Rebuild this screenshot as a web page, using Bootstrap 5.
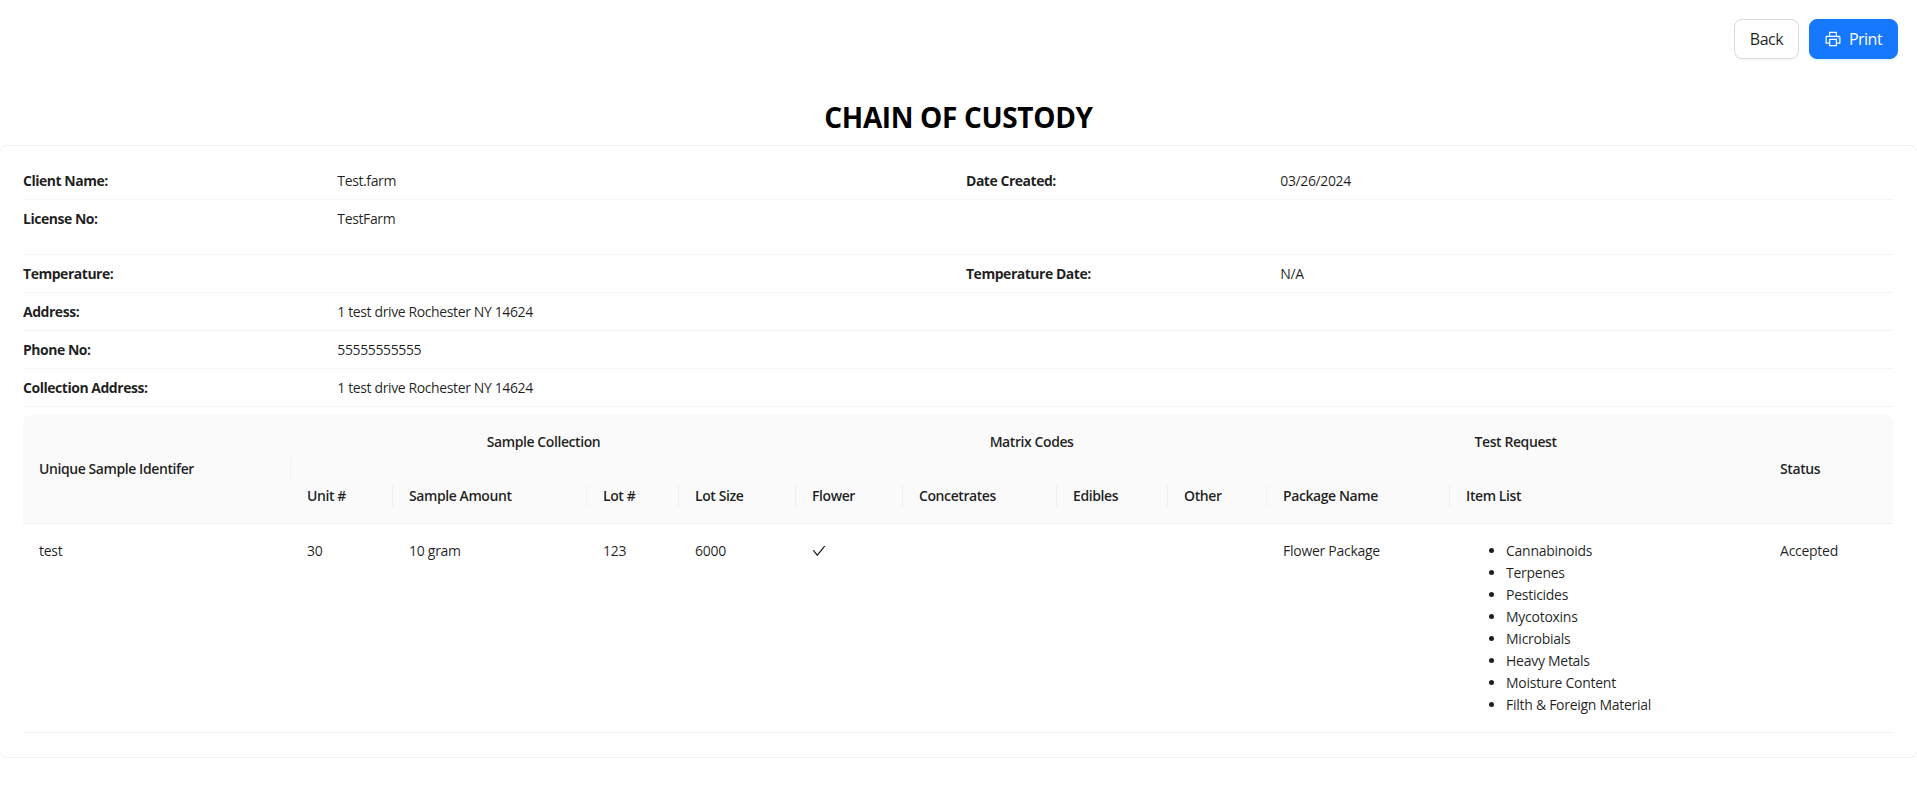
<!DOCTYPE html>
<html lang="en">
<head>
  <meta charset="UTF-8" />
  <meta name="viewport" content="width=device-width, initial-scale=1" />
  <title>Chain of Custody</title>
  <link href="https://cdn.jsdelivr.net/npm/bootstrap@5.3.0/dist/css/bootstrap.min.css" rel="stylesheet" />
  <style>
    body {
      font-family: "Open Sans", "Noto Sans", sans-serif;
      font-size: 14px;
      line-height: 22px;
      letter-spacing: -0.28px;
      color: rgba(0, 0, 0, 0.88);
      overflow-x: hidden;
    }
    .toolbar { padding: 19px 19px 0 0; gap: 10px; }
    .btn-lg-tool {
      height: 40px;
      padding: 0;
      font-size: 16px;
      letter-spacing: -0.5px;
      border-radius: 8px;
    }
    .btn-back { width: 65px; border-color: #d9d9d9; color: rgba(0, 0, 0, 0.88); background: #fff; box-shadow: 0 2px 0 rgba(0, 0, 0, 0.02); }
    .btn-print { width: 89px; background: #1677ff; border-color: #1677ff; color: #fff; gap: 8px; box-shadow: 0 2px 0 rgba(5, 145, 255, 0.1); }
    .page-title { font-size: 28px; font-weight: 700; line-height: 34px; letter-spacing: -0.35px; color: #000; margin: 41px 0 11px; }
    .custody-card { margin: 0 -1px; padding: 16px 24px 24px 23px; border: 1px solid #f0f0f0; border-radius: 8px; }
    .info-row { padding: 8px 0 7px; border-bottom: 1px solid #f5f5f5; letter-spacing: -0.38px; }
    .info-row.tall { padding-bottom: 24px; }
    .info-row strong { font-weight: 700; letter-spacing: -0.47px; }
    .custody-table { table-layout: fixed; width: 1870px; margin-top: 8px; border-collapse: separate; border-spacing: 0; }
    .custody-table th { font-weight: 600; background: #fafafa; padding: 16px; letter-spacing: -0.42px; white-space: nowrap; }
    .custody-table .last-head { border-bottom: 1px solid #f0f0f0; }
    .custody-table tr:first-child th:first-child { border-top-left-radius: 8px; }
    .custody-table tr:first-child th:last-child { border-top-right-radius: 8px; }
    /* short divider between header cells */
    .custody-table .split {
      background: linear-gradient(#f0f0f0, #f0f0f0) right center / 1px 22px no-repeat #fafafa;
    }
    .custody-table td { padding: 16px; border-bottom: 1px solid #f0f0f0; vertical-align: top; }
    .custody-table td svg { vertical-align: -0.125em; }
    .custody-table ul { padding-left: 40px; }
  </style>
</head>
<body>
  <div class="toolbar d-flex justify-content-end">
    <button type="button" class="btn btn-back btn-lg-tool">Back</button>
    <button type="button" class="btn btn-print btn-lg-tool d-flex align-items-center justify-content-center">
      <svg width="16" height="16" viewBox="64 64 896 896" fill="currentColor" aria-hidden="true"><path d="M820 436h-40c-4.400 0-8 3.600-8 8v40c0 4.400 3.600 8 8 8h40c4.400 0 8-3.600 8-8v-40c0-4.400-3.600-8-8-8zm32-104H732V120c0-4.400-3.600-8-8-8H300c-4.400 0-8 3.600-8 8v212H172c-44.200 0-80 35.800-80 80v328c0 17.700 14.300 32 32 32h168v132c0 4.400 3.600 8 8 8h424c4.400 0 8-3.600 8-8V772h168c17.700 0 32-14.300 32-32V412c0-44.200-35.800-80-80-80zM360 180h304v152H360V180zm304 664H360V568h304v276zm200-140H732V500H292v204H160V412c0-6.600 5.400-12 12-12h680c6.600 0 12 5.400 12 12v292z"/></svg>
      <span>Print</span>
    </button>
  </div>

  <h1 class="page-title text-center">CHAIN OF CUSTODY</h1>

  <div class="custody-card">
    <div class="info-row">
      <div class="row gx-3">
        <div class="col-2"><strong>Client Name:</strong></div>
        <div class="col-4">Test.farm</div>
        <div class="col-2"><strong>Date Created:</strong></div>
        <div class="col-4">03/26/2024</div>
      </div>
    </div>
    <div class="info-row tall">
      <div class="row gx-3">
        <div class="col-2"><strong>License No:</strong></div>
        <div class="col-4">TestFarm</div>
      </div>
    </div>
    <div class="info-row">
      <div class="row gx-3">
        <div class="col-2"><strong>Temperature:</strong></div>
        <div class="col-4"></div>
        <div class="col-2"><strong>Temperature Date:</strong></div>
        <div class="col-4">N/A</div>
      </div>
    </div>
    <div class="info-row">
      <div class="row gx-3">
        <div class="col-2"><strong>Address:</strong></div>
        <div class="col-4">1 test drive Rochester NY 14624</div>
      </div>
    </div>
    <div class="info-row">
      <div class="row gx-3">
        <div class="col-2"><strong>Phone No:</strong></div>
        <div class="col-4">55555555555</div>
      </div>
    </div>
    <div class="info-row">
      <div class="row gx-3">
        <div class="col-2"><strong>Collection Address:</strong></div>
        <div class="col-4">1 test drive Rochester NY 14624</div>
      </div>
    </div>

    <table class="custody-table">
      <colgroup>
        <col width="268" /><col width="102" /><col width="194" /><col width="92" /><col width="117" />
        <col width="107" /><col width="154" /><col width="111" /><col width="99" />
        <col width="183" /><col width="314" /><col width="129" />
      </colgroup>
      <thead>
        <tr>
          <th rowspan="2" class="split last-head">Unique Sample Identifer</th>
          <th colspan="4" class="text-center">Sample Collection</th>
          <th colspan="4" class="text-center">Matrix Codes</th>
          <th colspan="2" class="text-center">Test Request</th>
          <th rowspan="2" class="last-head">Status</th>
        </tr>
        <tr>
          <th class="split last-head">Unit #</th>
          <th class="split last-head">Sample Amount</th>
          <th class="split last-head">Lot #</th>
          <th class="split last-head">Lot Size</th>
          <th class="split last-head">Flower</th>
          <th class="split last-head">Concetrates</th>
          <th class="split last-head">Edibles</th>
          <th class="split last-head">Other</th>
          <th class="split last-head">Package Name</th>
          <th class="last-head">Item List</th>
        </tr>
      </thead>
      <tbody>
        <tr>
          <td>test</td>
          <td>30</td>
          <td>10 gram</td>
          <td>123</td>
          <td>6000</td>
          <td><svg width="14" height="14" viewBox="64 64 896 896" fill="currentColor" aria-label="Yes"><path d="M912 190h-69.900c-9.800 0-19.100 4.500-25.100 12.200L404.700 724.500 207 474a32 32 0 0 0-25.100-12.200H112c-6.700 0-10.400 7.700-6.300 12.900l273.900 347c12.800 16.200 37.400 16.200 50.300 0l488.400-618.900c4.100-5.100.4-12.800-6.300-12.800z"/></svg></td>
          <td></td>
          <td></td>
          <td></td>
          <td>Flower Package</td>
          <td>
            <ul class="mb-0">
              <li>Cannabinoids</li>
              <li>Terpenes</li>
              <li>Pesticides</li>
              <li>Mycotoxins</li>
              <li>Microbials</li>
              <li>Heavy Metals</li>
              <li>Moisture Content</li>
              <li>Filth &amp; Foreign Material</li>
            </ul>
          </td>
          <td>Accepted</td>
        </tr>
      </tbody>
    </table>
  </div>

  <script src="https://cdn.jsdelivr.net/npm/bootstrap@5.3.0/dist/js/bootstrap.bundle.min.js"></script>
</body>
</html>
